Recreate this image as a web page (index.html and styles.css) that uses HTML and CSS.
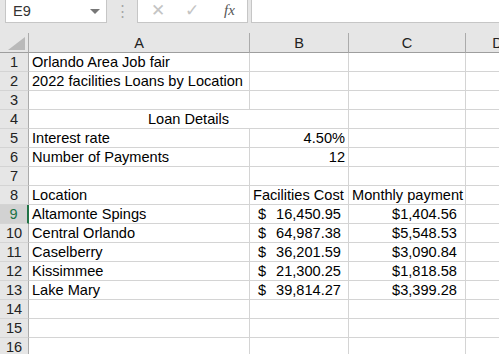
FILE: index.html
```html
<!DOCTYPE html>
<html lang="en">

<head>
    <meta charset="UTF-8">
    <title>Loans by Location</title>
    <link rel="stylesheet" href="styles.css">
</head>

<body>

    <div class="formula-bar">
        <div class="name-box">
            <span>E9</span>
            <span class="drop-arrow"></span>
        </div>
        <div class="grip">&#8942;</div>
        <div class="fx-box">
            <span class="fx-icon">&#10005;</span>
            <span class="fx-icon">&#10003;</span>
            <span class="fx-label">fx</span>
        </div>
        <div class="formula-input"></div>
    </div>

    <div class="bar-gap"></div>

    <div class="sheet">
        <!-- column headers -->
        <div class="corner"><span class="corner-tri"></span></div>
        <div class="col-head">A</div>
        <div class="col-head">B</div>
        <div class="col-head">C</div>
        <div class="col-head">D</div>

        <div class="row-head">1</div>
        <div class="cell">Orlando Area Job fair</div>
        <div class="cell"></div>
        <div class="cell"></div>
        <div class="cell"></div>

        <div class="row-head">2</div>
        <div class="cell">2022 facilities Loans by Location</div>
        <div class="cell"></div>
        <div class="cell"></div>
        <div class="cell"></div>

        <div class="row-head">3</div>
        <div class="cell"></div>
        <div class="cell"></div>
        <div class="cell"></div>
        <div class="cell"></div>

        <div class="row-head">4</div>
        <div class="cell merged">Loan Details</div>
        <div class="cell"></div>
        <div class="cell"></div>

        <div class="row-head">5</div>
        <div class="cell">Interest rate</div>
        <div class="cell num">4.50%</div>
        <div class="cell"></div>
        <div class="cell"></div>

        <div class="row-head">6</div>
        <div class="cell">Number of Payments</div>
        <div class="cell num">12</div>
        <div class="cell"></div>
        <div class="cell"></div>

        <div class="row-head">7</div>
        <div class="cell"></div>
        <div class="cell"></div>
        <div class="cell"></div>
        <div class="cell"></div>

        <div class="row-head">8</div>
        <div class="cell">Location</div>
        <div class="cell">Facilities Cost</div>
        <div class="cell">Monthly payment</div>
        <div class="cell"></div>

        <div class="row-head selected">9</div>
        <div class="cell">Altamonte Spings</div>
        <div class="cell money"><span>$</span><span>16,450.95</span></div>
        <div class="cell num pay">$1,404.56</div>
        <div class="cell"></div>

        <div class="row-head">10</div>
        <div class="cell">Central Orlando</div>
        <div class="cell money"><span>$</span><span>64,987.38</span></div>
        <div class="cell num pay">$5,548.53</div>
        <div class="cell"></div>

        <div class="row-head">11</div>
        <div class="cell">Caselberry</div>
        <div class="cell money"><span>$</span><span>36,201.59</span></div>
        <div class="cell num pay">$3,090.84</div>
        <div class="cell"></div>

        <div class="row-head">12</div>
        <div class="cell">Kissimmee</div>
        <div class="cell money"><span>$</span><span>21,300.25</span></div>
        <div class="cell num pay">$1,818.58</div>
        <div class="cell"></div>

        <div class="row-head">13</div>
        <div class="cell">Lake Mary</div>
        <div class="cell money"><span>$</span><span>39,814.27</span></div>
        <div class="cell num pay">$3,399.28</div>
        <div class="cell"></div>

        <div class="row-head">14</div>
        <div class="cell"></div>
        <div class="cell"></div>
        <div class="cell"></div>
        <div class="cell"></div>

        <div class="row-head">15</div>
        <div class="cell"></div>
        <div class="cell"></div>
        <div class="cell"></div>
        <div class="cell"></div>

        <div class="row-head">16</div>
        <div class="cell"></div>
        <div class="cell"></div>
        <div class="cell"></div>
        <div class="cell"></div>
    </div>

</body>

</html>
```

FILE: styles.css
```css
body {
    margin: 0;
    width: 499px;
    height: 354px;
    overflow: hidden;
    background-color: #e6e6e6;
    font-family: "Liberation Sans", Arial, sans-serif;
    font-size: 14.6px;
    color: #000;
}

/* 公式栏 */
.formula-bar {
    display: flex;
    height: 23px;
    background-color: #e6e6e6;
}

.name-box {
    display: flex;
    align-items: center;
    justify-content: space-between;
    box-sizing: border-box;
    width: 102px;
    height: 23px;
    margin-left: 5px;
    padding: 0 6px 1px 7px;
    background-color: #fff;
    border: 1px solid #c6c6c6;
    border-top: none;
    color: #333;
}

.drop-arrow {
    width: 0;
    height: 0;
    border-left: 5px solid transparent;
    border-right: 5px solid transparent;
    border-top: 5px solid #777;
    margin-top: 1px;
}

.grip {
    width: 30px;
    text-align: center;
    color: #a6a6a6;
    font-size: 15px;
    line-height: 22px;
}

.fx-box {
    display: flex;
    align-items: center;
    box-sizing: border-box;
    width: 111px;
    height: 23px;
    background-color: #fff;
    border: 1px solid #c6c6c6;
    border-top: none;
    padding: 0 0 1px 13px;
}

.fx-icon {
    width: 34px;
    color: #c4c4c4;
    font-size: 17px;
}

.fx-label {
    margin-left: 5px;
    font-family: "Liberation Serif", "Times New Roman", serif;
    font-style: italic;
    font-size: 15px;
    color: #555;
}

.formula-input {
    flex: 1;
    height: 23px;
    margin-left: 3px;
    box-sizing: border-box;
    background-color: #fff;
    border: 1px solid #c6c6c6;
    border-top: none;
    border-right: none;
}

.bar-gap {
    height: 10px;
}

/* 表格区域 */
.sheet {
    display: grid;
    grid-template-columns: 29px 221px 99px 117px 64px;
    grid-template-rows: 20px repeat(16, 19px);
    background-color: #fff;
}

.corner,
.col-head,
.row-head {
    box-sizing: border-box;
    background-color: #e6e6e6;
    color: #222;
}

.corner {
    position: relative;
    border-right: 1px solid #ababab;
    border-bottom: 1px solid #9e9e9e;
}

.corner-tri {
    position: absolute;
    right: 3px;
    bottom: 2px;
    width: 0;
    height: 0;
    border-left: 17px solid transparent;
    border-bottom: 13px solid #b9b9b9;
}

.col-head {
    text-align: center;
    line-height: 18px;
    padding-top: 1px;
    border-right: 1px solid #ababab;
    border-bottom: 1px solid #9e9e9e;
}

.row-head {
    text-align: center;
    line-height: 18px;
    border-right: 1px solid #ababab;
    border-bottom: 1px solid #d4d4d4;
}

.row-head.selected {
    background-color: #d2d2d2;
    color: #217346;
    border-right: 2px solid #217346;
}

.cell {
    box-sizing: border-box;
    padding: 0 3px;
    line-height: 18px;
    white-space: nowrap;
    border-right: 1px solid #d4d4d4;
    border-bottom: 1px solid #d4d4d4;
}

.merged {
    grid-column: span 2;
    text-align: center;
}

.num {
    text-align: right;
}

.pay {
    padding-right: 8px;
}

.money {
    display: flex;
    justify-content: space-between;
    padding: 0 7px 0 8px;
}
```
